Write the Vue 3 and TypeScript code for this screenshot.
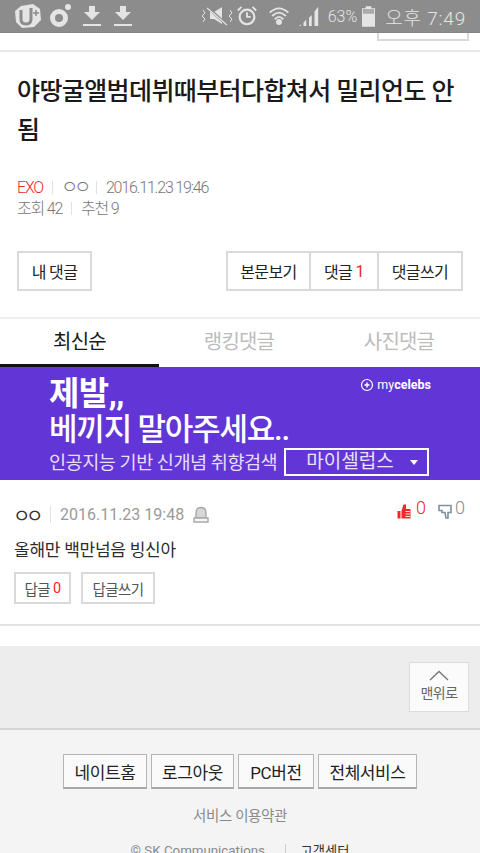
<template>
  <div class="page">
    <!-- status bar -->
    <div class="status">
      <div class="status-left">
        <svg width="28" height="26" viewBox="0 0 28 26">
          <path d="M7 3 L19 1 L26 6 L27 17 L20 24 L8 25 L2 19 L1 8 Z" fill="#e4e4e4" />
          <path d="M7 7 V16 Q7 21 12 21 Q17 21 17 16 V5" fill="none" stroke="#8c8c8c" stroke-width="3" />
          <path d="M19 10 H25 M22 7 V13" stroke="#8c8c8c" stroke-width="1.5" />
        </svg>
        <svg class="ring" width="22" height="26" viewBox="0 0 22 26">
          <circle cx="9" cy="15" r="6.5" fill="none" stroke="#e4e4e4" stroke-width="5" />
          <circle cx="18" cy="4" r="3" fill="#e4e4e4" />
        </svg>
        <svg v-for="n in 2" :key="n" class="dl" width="18" height="22" viewBox="0 0 18 22">
          <path d="M6 1 H12 V7 H17 L9 15 L1 7 H6 Z M0 19 H18 V21 H0 Z" fill="#e4e4e4" />
        </svg>
      </div>
      <div class="status-right">
        <svg width="32" height="20" viewBox="0 0 32 20">
          <path d="M9 6 H13 L21 1 V18 L13 13 H9 Z" fill="#e4e4e4" />
          <path d="M6 1 L26 19" stroke="#8c8c8c" stroke-width="3" />
          <path d="M6 2 L26 19" stroke="#e4e4e4" stroke-width="1.2" />
          <path d="M2 4 L4 7 L1 10 L4 13 L2 16 M29 4 L31 7 L28 10 L31 13 L29 16" fill="none" stroke="#e4e4e4" />
        </svg>
        <svg class="alarm" width="22" height="24" viewBox="0 0 24 24">
          <circle cx="12" cy="13" r="8" fill="none" stroke="#e4e4e4" stroke-width="2.4" />
          <path d="M12 8 V13 H16 M2 6 L6 2 M22 6 L18 2" fill="none" stroke="#e4e4e4" stroke-width="2" />
        </svg>
        <svg class="wifi" width="22" height="22" viewBox="0 0 26 24">
          <path d="M2 8 Q13 -2 24 8 M5 12 Q13 4 21 12 M8 16 Q13 10 18 16" fill="none" stroke="#e4e4e4" stroke-width="2.2" />
          <circle cx="13" cy="19" r="3.5" fill="#e4e4e4" />
        </svg>
        <svg class="signal" width="22" height="22" viewBox="0 0 24 24">
          <path d="M1 23 H3 V21 L1 23 Z M6 23 H9 V16 L6 19 Z M12 23 H15 V11 L12 14 Z M18 23 H22 V2 L18 7 Z" fill="#e4e4e4" />
        </svg>
        <span class="pct">63%</span>
        <svg class="battery" width="13" height="21" viewBox="0 0 14 22">
          <path d="M4 0 H10 V2 H14 V22 H0 V2 H4 Z" fill="#e4e4e4" />
          <path d="M1 3 H13 V8 H1 Z" fill="#a9a9a9" />
        </svg>
        <span class="clock">오후 7:49</span>
      </div>
    </div>

    <!-- remainder of the section above, scrolled off -->
    <div class="top-rest">
      <div class="top-stub"></div>
    </div>

    <h1 class="title">야땅굴앨범데뷔때부터다합쳐서 밀리언도 안됨</h1>

    <div class="meta">
      <div class="meta-row">
        <span class="red">EXO</span>
        <i class="bar"></i>
        <span class="circles">ㅇㅇ</span>
        <i class="bar"></i>
        <span>2016.11.23 19:46</span>
      </div>
      <div class="meta-row">
        <span>조회 42</span>
        <i class="bar"></i>
        <span>추천 9</span>
      </div>
    </div>

    <div class="actions">
      <div class="btn mine">내 댓글</div>
      <div class="btn-group">
        <div class="btn view">본문보기</div>
        <div class="btn reply">댓글 <em>1</em></div>
        <div class="btn write">댓글쓰기</div>
      </div>
    </div>

    <div class="tabs">
      <div v-for="(tab, i) in tabs" :key="tab" class="tab" :class="{ on: i === 0 }">{{ tab }}</div>
    </div>

    <div class="banner">
      <div class="brand">
        <svg width="14" height="14" viewBox="0 0 14 14">
          <circle cx="7" cy="7" r="5.5" fill="none" stroke="#fff" stroke-width="1.2" />
          <path d="M7 4.5 V9.5 M4.5 7 H9.5" stroke="#fff" stroke-width="1.4" />
        </svg>
        <span>my<b>celebs</b></span>
      </div>
      <div class="banner-big">제발,,</div>
      <div class="banner-mid">베끼지 말아주세요..</div>
      <div class="banner-low">
        <span>인공지능 기반 신개념 취향검색</span>
        <div class="select">
          <span>마이셀럽스</span>
          <i class="caret"></i>
        </div>
      </div>
    </div>

    <div class="comment">
      <div class="comment-head">
        <div class="comment-info">
          <span class="nick">ㅇㅇ</span>
          <i class="bar tall"></i>
          <span class="date">2016.11.23 19:48</span>
          <svg class="siren" width="16" height="17" viewBox="0 0 16 17">
            <path d="M3 12 V7 Q3 1.5 8 1.5 Q13 1.5 13 7 V12 Z" fill="#d6d6d6" stroke="#a8a8a8" stroke-width="1.4" />
            <path d="M1 12 H15 V16 H1 Z" fill="#f6f6f6" stroke="#a8a8a8" stroke-width="1.4" />
          </svg>
        </div>
        <div class="votes">
          <span class="vote up">
            <svg width="14" height="15" viewBox="0 0 14 15">
              <path d="M0.5 7 H3.5 V14.5 H0.5 Z M4.5 7 L6.5 0.5 H9 V5 H13.5 V14.5 H4.5 Z" fill="#f3262a" />
              <path d="M8.5 7.5 H13 M8.5 10 H13 M8.5 12.5 H13" stroke="#fff" stroke-width="0.9" />
            </svg>
            <span>0</span>
          </span>
          <span class="vote down">
            <svg width="14" height="15" viewBox="0 0 14 15">
              <path d="M1 1.5 H13 V8.5 H10 V14 H8 L7 8.5 H4 V6.5 H1 Z" fill="none" stroke="#7d929e" stroke-width="1.6" />
            </svg>
            <span>0</span>
          </span>
        </div>
      </div>
      <p class="comment-body">올해만 백만넘음 빙신아</p>
      <div class="comment-btns">
        <div class="btn small answer">답글 <em>0</em></div>
        <div class="btn small answer-write">답글쓰기</div>
      </div>
    </div>

    <div class="to-top-area">
      <div class="to-top">
        <svg width="20" height="11" viewBox="0 0 20 11">
          <path d="M1 10 L10 1.5 L19 10" fill="none" stroke="#777" stroke-width="1.4" />
        </svg>
        <span>맨위로</span>
      </div>
    </div>

    <div class="footer">
      <div class="foot-btns">
        <div
          v-for="item in footLinks"
          :key="item.label"
          class="foot-btn"
          :style="{ width: item.width + 'px' }"
        >{{ item.label }}</div>
      </div>
      <div class="terms">서비스 이용약관</div>
      <div class="copy">
        <span>© SK Communications.</span>
        <i class="bar"></i>
        <strong>고객센터</strong>
      </div>
    </div>
  </div>
</template>

<script setup lang="ts">
const tabs: string[] = ['최신순', '랭킹댓글', '사진댓글']
const footLinks: { label: string; width: number }[] = [
  { label: '네이트홈', width: 84 },
  { label: '로그아웃', width: 83 },
  { label: 'PC버전', width: 76 },
  { label: '전체서비스', width: 99 }
]
</script>

<style>
html,
body {
  margin: 0;
  height: 853px;
  overflow: hidden;
  background: #fff;
}
</style>

<style scoped>
.page {
  width: 480px;
  height: 853px;
  overflow: hidden;
  font-family: Roboto, "Noto Sans CJK KR", sans-serif;
  color: #222;
  background: #fff;
}

.status {
  height: 33px;
  box-sizing: border-box;
  background: #8c8c8c;
  border-bottom: 1px solid #858585;
  display: flex;
  justify-content: space-between;
  align-items: center;
  padding: 0 14px 0 14px;
  color: #e4e4e4;
}
.status-left,
.status-right {
  display: flex;
  align-items: center;
}
.ring {
  margin-left: 8px;
}
.dl {
  margin-left: 13px;
}
.ring + .dl {
  margin-left: 11px;
}
.alarm {
  margin-left: 3px;
}
.wifi {
  margin-left: 10px;
}
.signal {
  margin-left: 8px;
}
.pct {
  font-size: 16px;
  font-weight: 300;
  margin-left: 8px;
}
.battery {
  margin-left: 5px;
}
.clock {
  font-size: 19px;
  font-weight: 300;
  margin-left: 10px;
  letter-spacing: 0.8px;
}

.top-rest {
  height: 17px;
  border-bottom: 2px solid #e8e8e8;
  display: flex;
  justify-content: flex-end;
  padding-right: 11px;
}
.top-stub {
  width: 88px;
  height: 6px;
  border: 2px solid #d9d9d9;
  border-top: 0;
}

.title {
  margin: 20px 15px 0 17px;
  font-size: 25px;
  line-height: 39px;
  font-weight: 500;
  letter-spacing: -0.6px;
  color: #1a1a1a;
}

.meta {
  margin: 27px 0 0 17px;
  font-size: 16px;
  line-height: 21px;
  font-weight: 300;
  color: #777;
  letter-spacing: -1.2px;
}
.meta-row {
  display: flex;
  align-items: center;
}
.circles {
  font-size: 19px;
  letter-spacing: -4.5px;
  margin-left: -1px;
}
.red {
  color: #f3262a;
}
.bar {
  width: 1px;
  height: 13px;
  background: #e2e2e2;
  margin: 0 9px;
}

.actions {
  margin-top: 32px;
  padding: 0 17px;
  display: flex;
  justify-content: space-between;
  height: 40px;
}
.btn {
  box-sizing: border-box;
  border: 2px solid #d9d9d9;
  height: 40px;
  display: flex;
  align-items: center;
  justify-content: center;
  font-size: 16px;
  letter-spacing: -0.6px;
  color: #222;
  white-space: pre;
}
.btn em {
  font-style: normal;
  color: #f3262a;
}
.mine {
  width: 75px;
}
.btn-group {
  display: flex;
}
.btn-group .btn + .btn {
  margin-left: -2px;
}
.view {
  width: 85px;
}
.reply {
  width: 70px;
}
.write {
  width: 86px;
}

.tabs {
  margin-top: 26px;
  border-top: 2px solid #efefef;
  height: 48px;
  display: flex;
}
.tab {
  width: 160px;
  box-sizing: border-box;
  height: 48px;
  text-align: center;
  line-height: 46px;
  font-size: 20px;
  letter-spacing: -0.8px;
  color: #bcbcbc;
}
.tab.on {
  color: #1a1a1a;
  border-bottom: 3px solid #111;
  width: 159px;
}

.banner {
  position: relative;
  height: 113px;
  background: #6236d6;
  color: #fff;
  padding-left: 49px;
  box-sizing: border-box;
  overflow: hidden;
}
.brand {
  position: absolute;
  top: 10px;
  right: 49px;
  display: flex;
  align-items: center;
  gap: 3px;
  font-size: 12.5px;
  color: #fff;
}
.banner-big {
  font-size: 33px;
  font-weight: 700;
  line-height: 36px;
  padding-top: 9px;
  letter-spacing: -0.5px;
}
.banner-mid {
  font-size: 31px;
  font-weight: 500;
  line-height: 36px;
  letter-spacing: -1.2px;
}
.banner-low {
  display: flex;
  align-items: center;
  font-size: 18.6px;
  line-height: 28px;
  letter-spacing: -0.5px;
  color: #e6def8;
  margin-top: 1px;
  white-space: nowrap;
}
.select {
  box-sizing: border-box;
  width: 145px;
  height: 28px;
  margin-left: 7px;
  margin-top: -3px;
  border: 2px solid #fff;
  color: #e9e2fa;
  display: flex;
  align-items: center;
  padding-left: 20px;
  position: relative;
  font-size: 19px;
  letter-spacing: 0;
}
.caret {
  position: absolute;
  right: 9px;
  top: 10px;
  border-left: 4px solid transparent;
  border-right: 4px solid transparent;
  border-top: 5px solid #fff;
}

.comment {
  height: 146px;
  box-sizing: border-box;
  border-bottom: 2px solid #e3e3e3;
  padding: 20px 15px 0 14px;
}
.comment-head {
  display: flex;
  justify-content: space-between;
  align-items: flex-start;
  height: 28px;
}
.comment-info {
  display: flex;
  align-items: center;
  font-size: 16px;
  height: 28px;
}
.nick {
  color: #333;
  font-size: 19px;
  letter-spacing: -4.5px;
  margin-left: -1px;
}
.bar.tall {
  height: 17px;
  margin: 0 9px 0 11px;
}
.date {
  color: #9a9a9a;
  font-weight: 400;
  letter-spacing: 0;
}
.siren {
  margin-left: 9px;
}
.votes {
  display: flex;
  gap: 12px;
  margin-top: -2px;
}
.vote {
  display: flex;
  align-items: flex-start;
  font-size: 18px;
  font-weight: 300;
  gap: 5px;
  line-height: 20px;
}
.vote svg {
  margin-top: 6px;
}
.down svg {
  margin-right: -2px;
}
.up {
  color: #f3262a;
}
.down {
  color: #7d929e;
}
.comment-body {
  margin: 10px 0 0;
  font-size: 17px;
  line-height: 24px;
  letter-spacing: -0.25px;
  color: #2c2c2c;
}
.comment-btns {
  display: flex;
  gap: 10px;
  margin-top: 10px;
}
.btn.small {
  height: 32px;
  font-size: 14.5px;
  color: #555;
}
.answer {
  width: 57px;
}
.answer-write {
  width: 74px;
}

.to-top-area {
  margin-top: 20px;
  height: 84px;
  box-sizing: border-box;
  background: #ededed;
  border-bottom: 2px solid #d5d5d5;
  padding: 16px 11px 0 0;
  display: flex;
  justify-content: flex-end;
}
.to-top {
  box-sizing: border-box;
  width: 60px;
  height: 50px;
  background: #fbfbfb;
  border: 1px solid #dcdcdc;
  display: flex;
  flex-direction: column;
  align-items: center;
  padding-top: 7px;
  font-size: 14px;
  color: #666;
  letter-spacing: -0.5px;
}
.to-top svg {
  margin-bottom: 1px;
}

.footer {
  background: #f4f4f4;
  height: 124px;
  padding-top: 24px;
  box-sizing: border-box;
}
.foot-btns {
  display: flex;
  justify-content: center;
  gap: 4px;
}
.foot-btn {
  box-sizing: border-box;
  height: 35px;
  border: 1px solid #b5b5b5;
  border-bottom: 2px solid #a8a8a8;
  background: #fafafa;
  display: flex;
  align-items: center;
  justify-content: center;
  font-size: 17px;
  letter-spacing: -0.4px;
  color: #222;
}
.terms {
  margin-top: 17px;
  text-align: center;
  font-size: 14.5px;
  line-height: 22px;
  letter-spacing: -0.4px;
  color: #8a8a8a;
}
.copy {
  margin-top: 13px;
  display: flex;
  justify-content: center;
  align-items: center;
  font-size: 13.3px;
  color: #8a8a8a;
}
.copy .bar {
  margin: 0 14px 0 17px;
  background: #ccc;
}
.copy strong {
  font-weight: 400;
  color: #333;
}
</style>
